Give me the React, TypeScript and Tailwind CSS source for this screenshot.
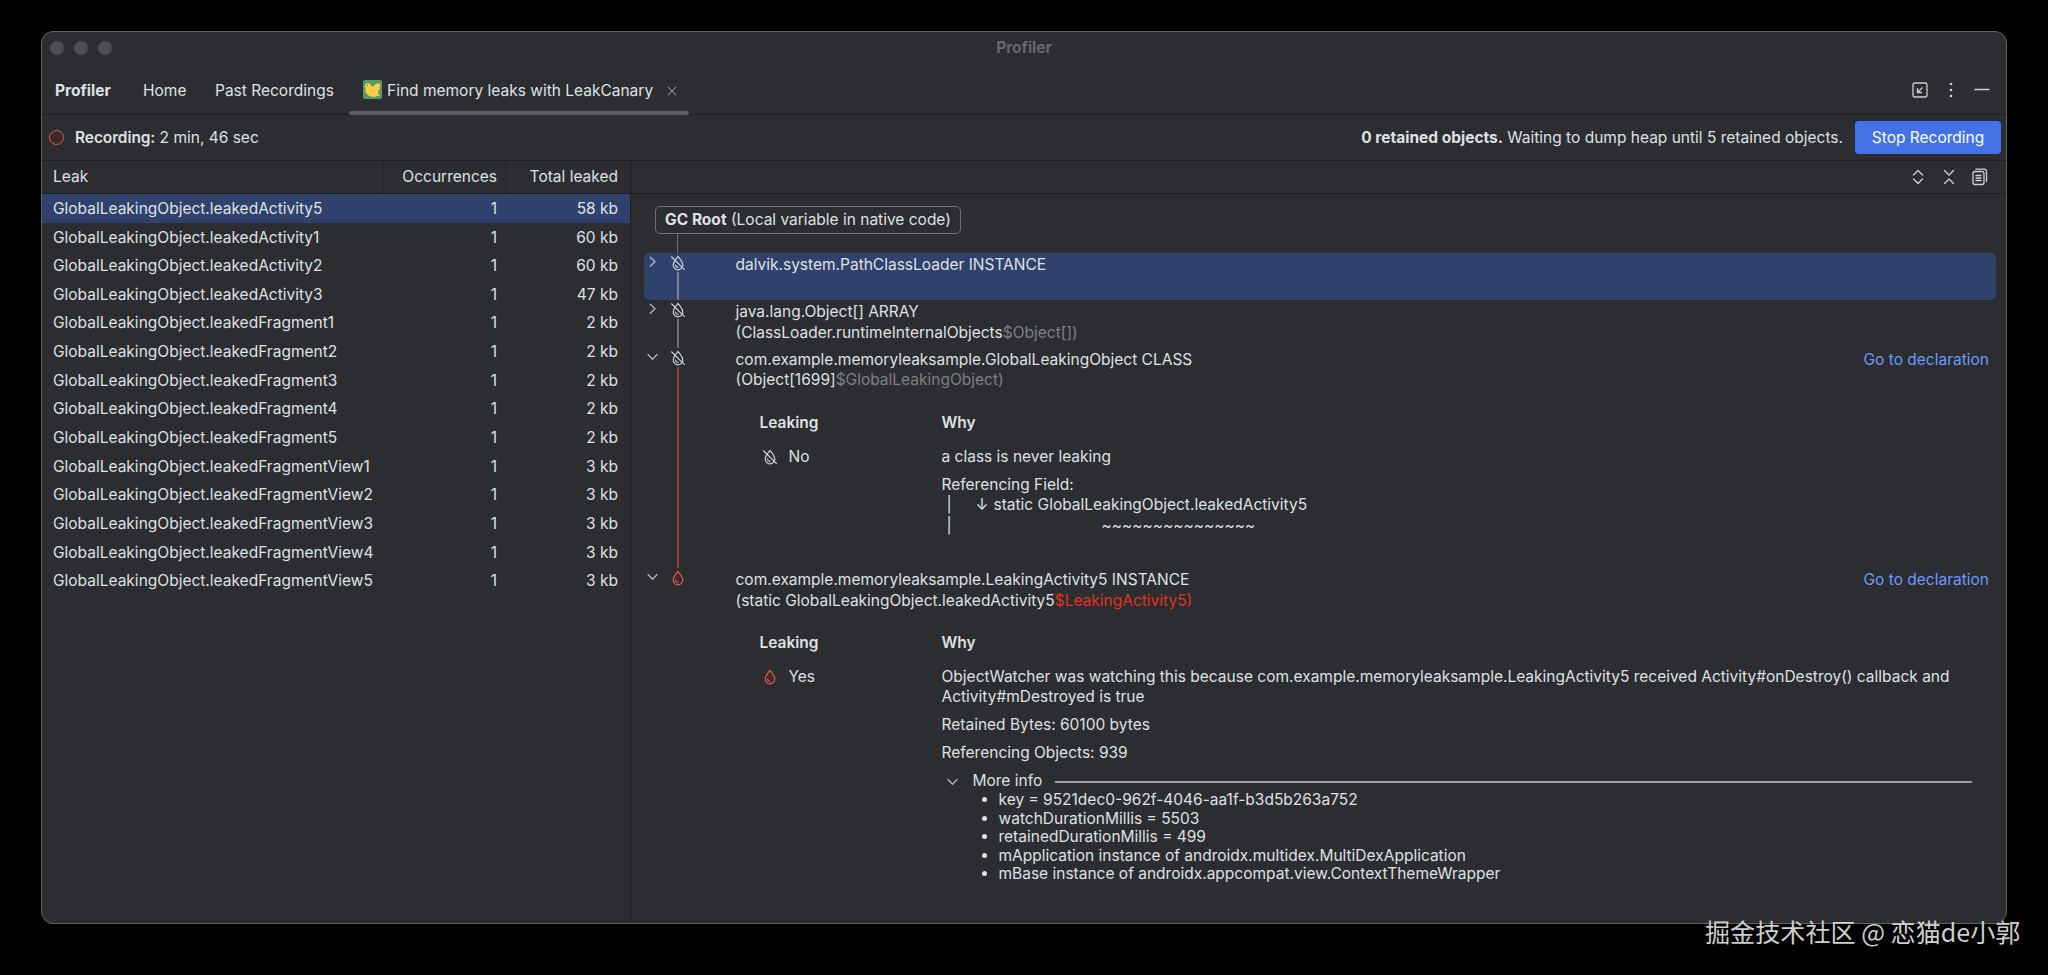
import React from 'react';

type LeakRow = { name: string; occurrences: number; total: string };

const leaks: LeakRow[] = [
  { name: 'GlobalLeakingObject.leakedActivity5', occurrences: 1, total: '58 kb' },
  { name: 'GlobalLeakingObject.leakedActivity1', occurrences: 1, total: '60 kb' },
  { name: 'GlobalLeakingObject.leakedActivity2', occurrences: 1, total: '60 kb' },
  { name: 'GlobalLeakingObject.leakedActivity3', occurrences: 1, total: '47 kb' },
  { name: 'GlobalLeakingObject.leakedFragment1', occurrences: 1, total: '2 kb' },
  { name: 'GlobalLeakingObject.leakedFragment2', occurrences: 1, total: '2 kb' },
  { name: 'GlobalLeakingObject.leakedFragment3', occurrences: 1, total: '2 kb' },
  { name: 'GlobalLeakingObject.leakedFragment4', occurrences: 1, total: '2 kb' },
  { name: 'GlobalLeakingObject.leakedFragment5', occurrences: 1, total: '2 kb' },
  { name: 'GlobalLeakingObject.leakedFragmentView1', occurrences: 1, total: '3 kb' },
  { name: 'GlobalLeakingObject.leakedFragmentView2', occurrences: 1, total: '3 kb' },
  { name: 'GlobalLeakingObject.leakedFragmentView3', occurrences: 1, total: '3 kb' },
  { name: 'GlobalLeakingObject.leakedFragmentView4', occurrences: 1, total: '3 kb' },
  { name: 'GlobalLeakingObject.leakedFragmentView5', occurrences: 1, total: '3 kb' },
];

const moreInfo = [
  'key = 9521dec0-962f-4046-aa1f-b3d5b263a752',
  'watchDurationMillis = 5503',
  'retainedDurationMillis = 499',
  'mApplication instance of androidx.multidex.MultiDexApplication',
  'mBase instance of androidx.appcompat.view.ContextThemeWrapper',
];

const Drop: React.FC<{ leaking?: boolean }> = ({ leaking }) => (
  <svg
    className={`w-4 h-4 shrink-0 ${leaking ? 'text-[#db5c5c]' : 'text-[#ced0d6]'}`}
    viewBox="0 0 16 16"
    fill="none"
    stroke="currentColor"
    strokeWidth="1.2"
    strokeLinecap="round"
  >
    <path
      d="M8 1.4C5.600 4.400 3.200 7 3.200 10a4.800 4.800 0 0 0 9.600 0C12.800 7 10.400 4.400 8 1.400Z"
      fill={leaking ? '#402929' : 'none'}
    />
    <path d="M5.500 10.200c.2 1.500 1.200 2.300 2.600 2.400" />
    {!leaking && <path d="M1.500 1.800 14.500 14.600" />}
  </svg>
);

const Chevron: React.FC<{ open?: boolean }> = ({ open }) => (
  <svg
    className="w-4 h-4 shrink-0 text-[#b4b8bf]"
    viewBox="0 0 16 16"
    fill="none"
    stroke="currentColor"
    strokeWidth="1.3"
    strokeLinecap="round"
    strokeLinejoin="round"
  >
    <path d={open ? 'M4 5.500 8.500 10.300 13 5.500' : 'M6.300 3.300 11 7.800 6.300 12.300'} />
  </svg>
);

const BirdIcon = () => (
  <svg className="w-[19px] h-[19px] shrink-0" viewBox="0 0 19 19">
    <rect width="19" height="19" rx="2" fill="#5b9a68" />
    <path
      d="M1.200 6.600 2.500 5.200C2.700 3.500 4.300 2.600 6 3.200c1.900.8 2 2.300 3.200 3.200 1.300-.2 2-.8 2.600-1.600.6-.9 1.500-1.200 2.600-1.200l3.400.2-1.200 1.700 1 .8-1.200 1.200.8 1.200-1.500 1.200c.1 1.500-.3 2.700-.9 3.600l2.200 2.200-3.300.2C11.600 17 8.600 17.200 6 15.800 2.800 14 1.800 11 2.600 7.400Z"
      fill="#f7d04b"
    />
    <path d="M6.500 9.500c1 1.700 3 2.300 5.200 1.500" fill="none" stroke="#e0a92f" strokeWidth=".8" />
    <circle cx="4.400" cy="5.300" r=".6" fill="#6b5a1e" />
  </svg>
);

const App: React.FC = () => {
  return (
    <div className="w-[2048px] h-[975px] overflow-hidden bg-black pl-[41px] pt-[31px] relative font-['Inter','Noto_Sans_CJK_SC',sans-serif] text-[15.5px] leading-[20.4px] text-[#dfe1e5]">
      <div className="w-[1966px] h-[893px] rounded-[12px] border border-[#616264] bg-[#2b2d30] overflow-hidden flex flex-col">
        {/* title bar */}
        <div className="h-[33px] shrink-0 grid grid-cols-3 items-center text-[#66686b] font-bold">
          <div className="flex gap-[10px] pl-2 pb-px">
            <span className="w-[14px] h-[14px] rounded-full bg-[#4c4e50]" />
            <span className="w-[14px] h-[14px] rounded-full bg-[#4c4e50]" />
            <span className="w-[14px] h-[14px] rounded-full bg-[#4c4e50]" />
          </div>
          <div className="text-center">Profiler</div>
        </div>

        {/* tabs */}
        <div className="h-[50px] shrink-0 flex border-b border-[#1e1f22] whitespace-nowrap">
          <div className="w-[87px] pl-[13px] pt-[16px] font-bold">Profiler</div>
          <div className="w-[72px] pl-[14px] pt-[16px]">Home</div>
          <div className="w-[148px] pl-[14px] pt-[16px]">Past Recordings</div>
          <div className="w-[340px] flex flex-col -mb-px">
            <div className="flex flex-1 items-start pl-[14px] pt-[15px]">
              <BirdIcon />
              <span className="ml-[5px] pt-px">Find memory leaks with LeakCanary</span>
              <svg
                className="w-[10px] h-[10px] shrink-0 ml-[14px] mt-[6px]"
                viewBox="0 0 11 11"
                stroke="#868a91"
                strokeWidth="1.2"
              >
                <path d="M1 1l9 9M10 1l-9 9" />
              </svg>
            </div>
            <div className="h-1 rounded-full bg-[#5a5d61]" />
          </div>
          <div className="flex-1" />
          <div className="flex gap-[11px] pt-[15px] pr-[14px] text-[#ced0d6]">
            <svg className="w-5 h-5" viewBox="0 0 20 20" fill="none" stroke="currentColor" strokeWidth="1.3">
              <rect x="3" y="3" width="14" height="14" rx="2" />
              <path d="M12.500 7.500 7.500 12.500M7.500 8v4.500H12" />
            </svg>
            <svg className="w-5 h-5" viewBox="0 0 20 20" fill="currentColor">
              <circle cx="10" cy="4" r="1.300" />
              <circle cx="10" cy="10" r="1.300" />
              <circle cx="10" cy="16" r="1.300" />
            </svg>
            <svg className="w-5 h-5" viewBox="0 0 20 20" stroke="currentColor" strokeWidth="1.300">
              <path d="M2.500 9.500h15" />
            </svg>
          </div>
        </div>

        {/* recording status */}
        <div className="h-[46px] shrink-0 flex items-center border-b border-[#1e1f22] whitespace-nowrap">
          <div className="ml-[7px] w-[15px] h-[15px] rounded-full border-[1.5px] border-[#db5c5c] bg-[#402929]" />
          <div className="ml-[11px] pt-[2px]">
            <b className="font-semibold tracking-[-0.1px]">Recording:</b> 2 min, 46 sec
          </div>
          <div className="flex-1" />
          <div className="pt-[2px]">
            <b className="font-bold">0 retained objects.</b> Waiting to dump heap until 5 retained objects.
          </div>
          <button className="ml-3 mr-[5px] w-[146px] h-[33px] pt-[2px] rounded-[4px] bg-[#4272e6] text-white">
            Stop Recording
          </button>
        </div>

        <div className="flex flex-1 min-h-0">
          {/* leak table */}
          <div className="w-[589px] shrink-0 border-r border-[#1e1f22]">
            <div className="h-[33px] flex items-center border-b border-[#1e1f22]">
              <div className="w-[342px] h-full flex items-center pl-[11px] pt-px border-r border-[#242528]">Leak</div>
              <div className="w-[122px] h-full flex items-center justify-end pr-[8px] pt-px border-r border-[#242528]">
                Occurrences
              </div>
              <div className="flex-1 text-right pr-[12px] pt-px">Total leaked</div>
            </div>
            {leaks.map((leak, i) => (
              <div
                key={leak.name}
                className={`h-[28.65px] flex items-center pt-[1.5px] ${i === 0 ? 'bg-[#30426c]' : ''}`}
              >
                <div className="w-[342px] pl-[11px]">{leak.name}</div>
                <div className="w-[122px] text-right pr-[9px]">{leak.occurrences}</div>
                <div className="flex-1 text-right pr-[12px]">{leak.total}</div>
              </div>
            ))}
          </div>

          {/* trace */}
          <div className="flex-1 min-w-0 flex flex-col">
            <div className="h-[33px] shrink-0 flex items-center justify-end gap-[11px] pr-[16px] border-b border-[#1e1f22] text-[#ced0d6]">
              <svg className="w-5 h-5" viewBox="0 0 20 20" fill="none" stroke="currentColor" strokeWidth="1.3" strokeLinecap="round" strokeLinejoin="round">
                <path d="M5.500 8 10 3.500 14.500 8M5.500 12 10 16.500 14.500 12" />
              </svg>
              <svg className="w-5 h-5" viewBox="0 0 20 20" fill="none" stroke="currentColor" strokeWidth="1.3" strokeLinecap="round" strokeLinejoin="round">
                <path d="M5.500 3.500 10 8 14.500 3.500M5.500 16.500 10 12 14.500 16.500" />
              </svg>
              <svg className="w-5 h-5" viewBox="0 0 20 20" fill="none" stroke="currentColor" strokeWidth="1.3" strokeLinecap="round">
                <rect x="3" y="4.500" width="11" height="13" rx="2" />
                <path d="M6 2.200h8.500a2 2 0 0 1 2 2V14.500M6 8.500h5M6 11h5M6 13.500h5" />
              </svg>
            </div>

            <div className="pl-[13px] pr-[10px] pt-[11.5px] whitespace-nowrap">
              <div className="ml-[11px] w-[306px] h-[28px] flex items-center justify-center pt-px rounded-[5px] border-[1.5px] border-[#6f7175]">
                <span>
                  <b className="font-bold">GC Root</b> (Local variable in native code)
                </span>
              </div>
              <div className="ml-[33px] w-px h-[19.3px] bg-[#6f7175]" />

              <div className="h-[47.6px] flex rounded-[5px] bg-[#30426c]">
                <div className="w-[26px] shrink-0 pt-[1px]">
                  <Chevron />
                </div>
                <div className="w-4 shrink-0 flex flex-col items-center pt-[2px]">
                  <Drop />
                  <div className="w-[1.5px] mt-px flex-1 bg-[#7b808a]" />
                </div>
                <div className="pl-[49.5px] pt-[2px]">dalvik.system.PathClassLoader INSTANCE</div>
              </div>

              <div className="h-[47.6px] flex">
                <div className="w-[26px] shrink-0 pt-[1px]">
                  <Chevron />
                </div>
                <div className="w-4 shrink-0 flex flex-col items-center pt-[2px]">
                  <Drop />
                  <div className="w-[1.5px] mt-px flex-1 bg-[#6f7175]" />
                </div>
                <div className="pl-[49.5px] pt-[2px]">
                  <div>java.lang.Object[] ARRAY</div>
                  <div>
                    (ClassLoader.runtimeInternalObjects<span className="text-[#7f8082]">$Object[])</span>
                  </div>
                </div>
              </div>

              <div className="h-[220.3px] flex">
                <div className="w-[26px] shrink-0 pt-[1px]">
                  <Chevron open />
                </div>
                <div className="w-4 shrink-0 flex flex-col items-center pt-[2px]">
                  <Drop />
                  <div className="w-[2px] mt-px flex-1 bg-[#9c3a35]" />
                </div>
                <div className="pl-[49.5px] pt-[2px] flex-1">
                  <div className="flex justify-between pr-[7px]">
                    <span>com.example.memoryleaksample.GlobalLeakingObject CLASS</span>
                    <span className="text-[#6b9bfa]">Go to declaration</span>
                  </div>
                  <div>
                    (Object[1699]<span className="text-[#7f8082]">$GlobalLeakingObject)</span>
                  </div>
                  <div className="flex pl-6 pt-[21.8px]">
                    <div className="w-[182px] shrink-0">
                      <div className="font-semibold">Leaking</div>
                      <div className="flex items-center mt-[13.5px] pl-[2px] gap-[11px]">
                        <Drop />
                        No
                      </div>
                    </div>
                    <div>
                      <div className="font-semibold">Why</div>
                      <div className="mt-[13.5px]">a class is never leaking</div>
                      <div className="mt-[7.8px]">Referencing Field:</div>
                      <div className="flex">
                        <span className="w-[34px] pl-[5px]">|</span>
                        <span className="w-[18px]">↓</span>
                        static GlobalLeakingObject.leakedActivity5
                      </div>
                      <div className="flex">
                        <span className="w-[160px] pl-[5px]">|</span>~~~~~~~~~~~~~~~
                      </div>
                    </div>
                  </div>
                </div>
              </div>

              <div className="flex">
                <div className="w-[26px] shrink-0 pt-[1px]">
                  <Chevron open />
                </div>
                <div className="w-4 shrink-0 pt-[2px]">
                  <Drop leaking />
                </div>
                <div className="pl-[49.5px] pt-[2px] flex-1">
                  <div className="flex justify-between pr-[7px]">
                    <span>com.example.memoryleaksample.LeakingActivity5 INSTANCE</span>
                    <span className="text-[#6b9bfa]">Go to declaration</span>
                  </div>
                  <div>
                    (static GlobalLeakingObject.leakedActivity5<span className="text-[#e03322]">$LeakingActivity5)</span>
                  </div>
                  <div className="flex pl-6 pt-[21.5px]">
                    <div className="w-[182px] shrink-0">
                      <div className="font-semibold">Leaking</div>
                      <div className="flex items-center mt-[14px] pl-[2px] gap-[11px]">
                        <Drop leaking />
                        Yes
                      </div>
                    </div>
                    <div className="flex-1">
                      <div className="font-semibold">Why</div>
                      <div className="mt-[14px]">
                        ObjectWatcher was watching this because com.example.memoryleaksample.LeakingActivity5 received
                        Activity#onDestroy() callback and
                        <br />
                        Activity#mDestroyed is true
                      </div>
                      <div className="mt-[7.6px]">Retained Bytes: 60100 bytes</div>
                      <div className="mt-[7.6px]">Referencing Objects: 939</div>
                      <div className="mt-[7.6px] flex items-center pl-[2px] pr-[24px]">
                        <Chevron open />
                        <span className="ml-[13px]">More info</span>
                        <div className="ml-[13px] flex-1 h-[2px] bg-[#9d9ea2]" />
                      </div>
                      <ul className="-mt-[0.5px] leading-[18.5px] list-disc pl-[57px]">
                        {moreInfo.map((line) => (
                          <li key={line}>{line}</li>
                        ))}
                      </ul>
                    </div>
                  </div>
                </div>
              </div>
            </div>
          </div>
        </div>
      </div>

      <div className="absolute left-[1705px] top-[913px] text-[25.1px] leading-[36px] text-[#cfcfcf] font-['Noto_Sans_CJK_SC',sans-serif] whitespace-nowrap">
        掘金技术社区 @ 恋猫de小郭
      </div>
    </div>
  );
};

export default App;
